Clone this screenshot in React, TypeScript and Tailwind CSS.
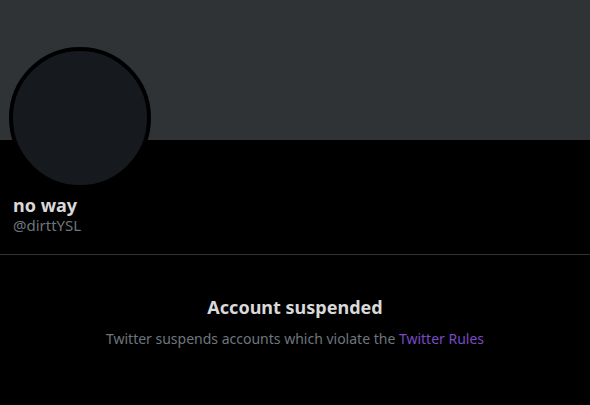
export default function App() {
  return (
    <div className="w-[590px] h-[405px] bg-black overflow-hidden font-['Noto_Sans',sans-serif]">
      {/* banner */}
      <div className="h-[140px] bg-[#2f3336]" />

      {/* avatar + names */}
      <div className="px-[9px]">
        <div className="-mt-[93px] w-[142px] h-[142px] rounded-full border-4 border-black bg-[#16191d]" />
        <div className="px-1 mt-[5px]">
          <div className="text-[18px] font-bold leading-[22px] text-[#d9d9d9]">no way</div>
          <div className="text-[15px] leading-[18px] text-[#6e767d]">@dirttYSL</div>
        </div>
      </div>

      <div className="mt-[20px] border-t border-[#2f3336]" />

      {/* suspended notice */}
      <div className="flex flex-col items-center pt-[40px]">
        <div className="text-[18px] font-bold leading-[24px] text-[#d9d9d9]">Account suspended</div>
        <div className="mt-[10px] text-[14px] leading-[20px] text-[#6e767d]">
          Twitter suspends accounts which violate the{" "}
          <span className="text-[#794bc4]">Twitter Rules</span>
        </div>
      </div>
    </div>
  );
}
